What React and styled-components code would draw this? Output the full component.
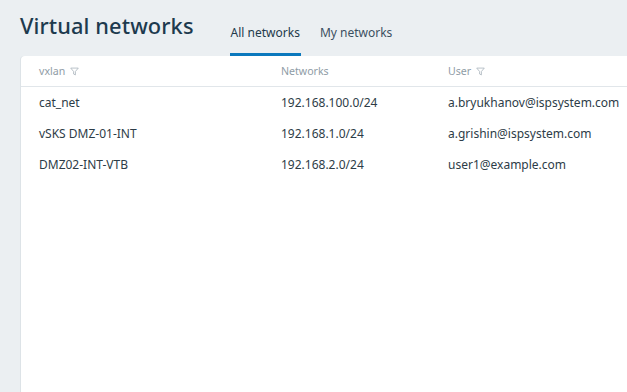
import React from "react";
import styled, { createGlobalStyle } from "styled-components";

const GlobalStyle = createGlobalStyle`
  html, body {
    margin: 0;
    padding: 0;
    height: 100%;
    overflow: hidden;
  }
  body {
    background: #ebeff2;
    font-family: "Noto Sans", "Open Sans", sans-serif;
    color: #2b3b47;
  }
  #root {
    height: 100%;
  }
`;

const networks = [
  { name: "cat_net", cidr: "192.168.100.0/24", user: "a.bryukhanov@ispsystem.com" },
  { name: "vSKS DMZ-01-INT", cidr: "192.168.1.0/24", user: "a.grishin@ispsystem.com" },
  { name: "DMZ02-INT-VTB", cidr: "192.168.2.0/24", user: "user1@example.com" },
];

const FilterIcon = () => (
  <FilterSvg viewBox="0 0 10 10" width="9" height="9">
    <path
      d="M0.8 1.2 H9.2 L6 5 V8.8 L4 7.8 V5 Z"
      fill="none"
      stroke="#a9b4bc"
      strokeWidth="0.9"
      strokeLinejoin="round"
    />
  </FilterSvg>
);

const App = () => {
  return (
    <Page>
      <GlobalStyle />
      <Header>
        <Title>Virtual networks</Title>
        <Tabs>
          <Tab active>All networks</Tab>
          <Tab>My networks</Tab>
        </Tabs>
      </Header>
      <Card>
        <HeadRow>
          <Cell w="242px">
            vxlan <FilterIcon />
          </Cell>
          <Cell w="167px">Networks</Cell>
          <Cell>
            User <FilterIcon />
          </Cell>
        </HeadRow>
        {networks.map((n) => (
          <Row key={n.name}>
            <Cell w="242px">{n.name}</Cell>
            <Cell w="167px">{n.cidr}</Cell>
            <Cell>{n.user}</Cell>
          </Row>
        ))}
      </Card>
    </Page>
  );
};

const Page = styled.div`
  height: 100%;
  display: flex;
  flex-direction: column;
`;

const Header = styled.header`
  display: flex;
  align-items: flex-end;
  height: 56px;
  padding-left: 20px;
  box-sizing: border-box;
`;

const Title = styled.h1`
  margin: 0 36px 19px 0;
  font-size: 21.8px;
  font-weight: 500;
  color: #1d3a4e;
  letter-spacing: 0.1px;
  line-height: 1;
`;

const Tabs = styled.div`
  display: flex;
  gap: 18px;
`;

const Tab = styled.div`
  font-size: 12px;
  color: ${(p) => (p.active ? "#233a4b" : "#3c5061")};
  padding: 0 1px 12px;
  border-bottom: 3px solid ${(p) => (p.active ? "#0b78bd" : "transparent")};
  line-height: 16px;
`;

const Card = styled.div`
  flex: 1;
  margin-left: 21px;
  background: #fff;
  border-radius: 4px 0 0 0;
  box-shadow: -1px 0 0 #dde3e7;
`;

const HeadRow = styled.div`
  display: flex;
  align-items: center;
  height: 30px;
  padding-left: 18px;
  border-bottom: 1px solid #e1e6ea;
  font-size: 10.6px;
  color: #8f9ca6;
`;

const Row = styled.div`
  display: flex;
  align-items: center;
  height: 31px;
  padding-left: 18px;
  font-size: 12px;
  color: #2d3c47;
`;

const Cell = styled.div`
  width: ${(p) => p.w || "auto"};
  flex-shrink: 0;
  display: flex;
  align-items: center;
  gap: 5px;
  white-space: nowrap;
`;

const FilterSvg = styled.svg`
  display: block;
`;

export default App;
